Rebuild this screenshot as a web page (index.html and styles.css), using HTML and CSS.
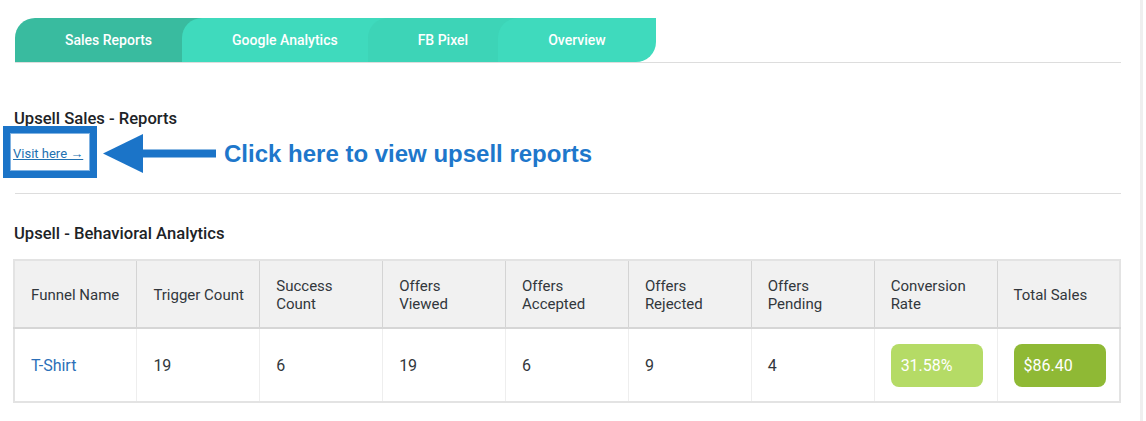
FILE: index.html
```html
<!DOCTYPE html>
<html lang="en">
<head>
<meta charset="utf-8">
<title>Upsell Reports</title>
<link rel="stylesheet" href="styles.css">
</head>
<body>
<div class="page">
  <nav class="tabs">
    <div class="tab tab-active">Sales Reports</div>
    <div class="tab">Google Analytics</div>
    <div class="tab tab-alt">FB Pixel</div>
    <div class="tab tab-last">Overview</div>
  </nav>

  <section class="section-reports">
    <h2 class="heading">Upsell Sales - Reports</h2>
    <div class="visit-row">
      <div class="callout-box"><a class="visit-link" href="#">Visit here →</a></div>
      <svg class="callout-arrow" width="113" height="40" viewBox="0 0 113 40">
        <polygon points="0,19.5 40,0 40,39" fill="#1b74c8"/>
        <rect x="39" y="15.5" width="74" height="8" fill="#1b74c8"/>
      </svg>
      <span class="callout-text">Click here to view upsell reports</span>
    </div>
  </section>

  <hr class="divider">

  <section class="section-analytics">
    <h2 class="heading heading-analytics">Upsell - Behavioral Analytics</h2>
    <table class="report-table">
      <thead>
        <tr>
          <th>Funnel Name</th>
          <th>Trigger Count</th>
          <th>Success<br>Count</th>
          <th>Offers<br>Viewed</th>
          <th>Offers<br>Accepted</th>
          <th>Offers<br>Rejected</th>
          <th>Offers<br>Pending</th>
          <th>Conversion<br>Rate</th>
          <th>Total Sales</th>
        </tr>
      </thead>
      <tbody>
        <tr>
          <td><a class="funnel-link" href="#">T-Shirt</a></td>
          <td>19</td>
          <td>6</td>
          <td>19</td>
          <td>6</td>
          <td>9</td>
          <td>4</td>
          <td><span class="badge badge-rate">31.58%</span></td>
          <td><span class="badge badge-sales">$86.40</span></td>
        </tr>
      </tbody>
    </table>
  </section>
</div>
</body>
</html>
```

FILE: styles.css
```css
* { box-sizing: border-box; }

html, body {
  margin: 0;
  padding: 0;
  background: #fff;
}

body {
  font-family: Roboto, "Liberation Sans", Arial, sans-serif;
  color: #1d2327;
}

.page {
  width: 1143px;
  min-height: 421px;
  padding: 18px 19px 0 15px;
  border-right: 3px solid #efefef;
}

/* Tabs */
.tabs {
  display: flex;
  border-bottom: 1px solid #dddddd;
}

.tab {
  height: 44px;
  line-height: 44px;
  padding: 0 50px;
  margin-right: -20px;
  background: #3fdabd;
  color: #fff;
  font-size: 14px;
  font-weight: 500;
  border-top-left-radius: 20px;
  border-bottom-right-radius: 20px;
  white-space: nowrap;
}

.tab-active { background: #39bb9f; }
.tab-alt { background: #3dd4b7; }
.tab-last { margin-right: 0; }

/* Headings */
.heading {
  margin: 47px 0 0 -1px;
  font-size: 16.6px;
  line-height: 18px;
  font-weight: 500;
  color: #1d2327;
}

.heading-analytics {
  margin-top: 31px;
}

/* Callout row */
.visit-row {
  display: flex;
  align-items: center;
  margin-top: -2px;
}

.callout-box {
  width: 94px;
  height: 52px;
  margin-left: -12px;
  border: 7px solid #1b74c8;
  box-shadow: inset 0 0 0 1px #7fb2e2;
  display: flex;
  align-items: center;
  padding: 2px 0 0 3px;
}

.visit-link {
  font-size: 13px;
  color: #2271b1;
  text-decoration: underline;
  white-space: nowrap;
}

.callout-arrow {
  display: block;
  margin-left: 6px;
  margin-top: 3px;
}

.callout-text {
  margin-left: 8px;
  font-family: "Liberation Sans", Arial, sans-serif;
  font-size: 24px;
  font-weight: 700;
  color: #1e77cb;
  white-space: nowrap;
  margin-top: 3px;
}

.divider {
  margin: 15px 0 0;
  border: 0;
  border-top: 1px solid #dddddd;
  height: 0;
}

/* Table */
.report-table {
  width: 1108px;
  margin: 16px 0 0 -2px;
  border-collapse: collapse;
  table-layout: fixed;
  border: 2px solid #e3e3e3;
}

.report-table th {
  height: 68px;
  background: #f1f1f1;
  text-align: left;
  font-weight: 400;
  font-size: 15px;
  line-height: 18px;
  color: #32373c;
  padding: 2px 15px 0 16px;
  border-right: 1px solid #d4d4d4;
  border-bottom: 2px solid #d6d6d6;
}

.report-table th:last-child,
.report-table td:last-child {
  border-right: 0;
}

.report-table td {
  height: 74px;
  padding: 0 15px 0 16px;
  font-size: 16px;
  color: #32373c;
  border-right: 1px solid #eeeeee;
}

.funnel-link {
  color: #2b6fb8;
  text-decoration: none;
}

.badge {
  display: block;
  width: 92px;
  height: 43px;
  line-height: 43px;
  padding-left: 10px;
  border-radius: 8px;
  color: #fff;
  font-size: 16px;
}

.badge-rate { background: #b5db66; }
.badge-sales { background: #8fb935; }
```
